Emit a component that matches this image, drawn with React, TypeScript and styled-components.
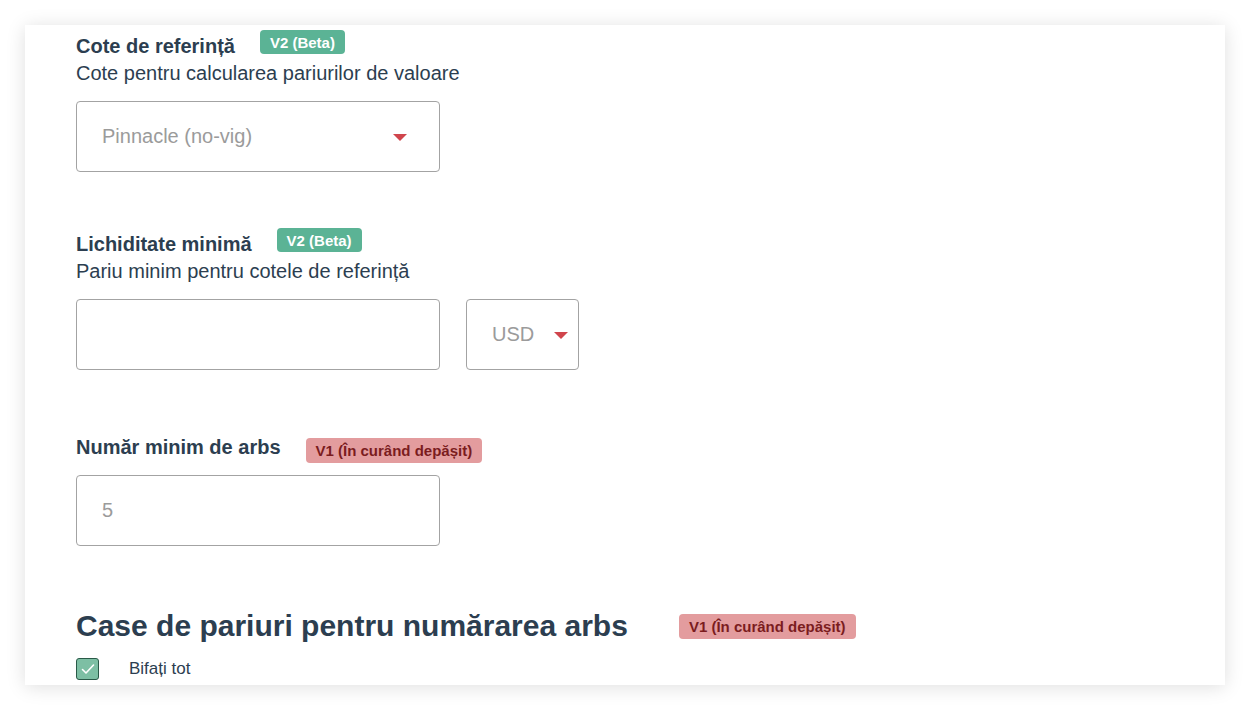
import React from "react";
import styled, { createGlobalStyle } from "styled-components";

const Global = createGlobalStyle`
  html, body { margin: 0; padding: 0; background: #ffffff; }
  body { font-family: "Liberation Sans", Arial, sans-serif; color: #2c3e50; }
  * { box-sizing: border-box; }
`;

const Page = styled.div`
  width: 1250px;
  height: 710px;
  padding: 25px;
  overflow: hidden;
`;

const Card = styled.div`
  width: 1200px;
  height: 660px;
  background: #fff;
  box-shadow: 0 2px 18px rgba(0, 0, 0, 0.13);
  padding: 5px 51px 0;
  overflow: hidden;
  display: flex;
  flex-direction: column;
`;

const Field = styled.section<{ $top: number }>`
  display: flex;
  flex-direction: column;
  margin-top: ${(p) => p.$top}px;
`;

const LabelRow = styled.div`
  display: flex;
  align-items: flex-start;
  gap: 25px;
`;

const Label = styled.div<{ $offset: number }>`
  font-size: 20px;
  font-weight: 700;
  line-height: 24px;
  margin-top: ${(p) => p.$offset}px;
  color: #2c3e50;
`;

const Badge = styled.span<{ $tone: "green" | "red"; $offset: number }>`
  display: inline-flex;
  align-items: center;
  height: ${(p) => (p.$tone === "green" ? 24 : 25)}px;
  padding: 0 10px;
  border-radius: 4px;
  font-size: 15px;
  font-weight: 700;
  margin-top: ${(p) => p.$offset}px;
  background: ${(p) => (p.$tone === "green" ? "#5bb395" : "#e39c9e")};
  color: ${(p) => (p.$tone === "green" ? "#ffffff" : "#7b1c1e")};
  white-space: nowrap;
`;

const Description = styled.div`
  font-size: 20px;
  line-height: 24px;
  color: #2c3e50;
  margin-top: 3px;
`;

const InputRow = styled.div<{ $top: number }>`
  display: flex;
  gap: 26px;
  margin-top: ${(p) => p.$top}px;
`;

const Box = styled.div<{ $width: number }>`
  position: relative;
  width: ${(p) => p.$width}px;
  height: 71px;
  border: 1px solid #a3a3a3;
  border-radius: 4px;
  display: flex;
  align-items: center;
  padding-left: 25px;
  font-size: 20px;
  color: #9b9b9b;
  background: #fff;
`;

const Caret = styled.span<{ $right: number }>`
  position: absolute;
  right: ${(p) => p.$right}px;
  top: 50%;
  margin-top: -3px;
  width: 0;
  height: 0;
  border-left: 7px solid transparent;
  border-right: 7px solid transparent;
  border-top: 7px solid #d0454c;
`;

const HeadingRow = styled.div`
  display: flex;
  align-items: center;
  gap: 51px;
  margin-top: 63px;
`;

const Heading = styled.h2`
  margin: 0;
  font-size: 30px;
  font-weight: 700;
  line-height: 34px;
  color: #2c3e50;
`;

const CheckRow = styled.label`
  display: flex;
  align-items: center;
  gap: 30px;
  margin-top: 15px;
  font-size: 17px;
  line-height: 20px;
  color: #2c3e50;
`;

const CheckBox = styled.span`
  width: 23px;
  height: 22px;
  border: 1.5px solid #2a5a48;
  border-radius: 3px;
  background: #7dbfa4;
  display: flex;
  align-items: center;
  justify-content: center;
`;

export default function App() {
  return (
    <>
      <Global />
      <Page>
        <Card>
          <Field $top={0}>
            <LabelRow>
              <Label $offset={4}>Cote de referință</Label>
              <Badge $tone="green" $offset={0}>V2 (Beta)</Badge>
            </LabelRow>
            <Description>Cote pentru calcularea pariurilor de valoare</Description>
            <InputRow $top={16}>
              <Box $width={364}>
                Pinnacle (no-vig)
                <Caret $right={32} />
              </Box>
            </InputRow>
          </Field>

          <Field $top={56}>
            <LabelRow>
              <Label $offset={4}>Lichiditate minimă</Label>
              <Badge $tone="green" $offset={0}>V2 (Beta)</Badge>
            </LabelRow>
            <Description>Pariu minim pentru cotele de referință</Description>
            <InputRow $top={16}>
              <Box $width={364} />
              <Box $width={113}>
                USD
                <Caret $right={10} />
              </Box>
            </InputRow>
          </Field>

          <Field $top={65}>
            <LabelRow>
              <Label $offset={0}>Număr minim de arbs</Label>
              <Badge $tone="red" $offset={3}>V1 (În curând depășit)</Badge>
            </LabelRow>
            <InputRow $top={12}>
              <Box $width={364}>5</Box>
            </InputRow>
          </Field>

          <HeadingRow>
            <Heading>Case de pariuri pentru numărarea arbs</Heading>
            <Badge $tone="red" $offset={0}>V1 (În curând depășit)</Badge>
          </HeadingRow>
          <CheckRow>
            <CheckBox>
              <svg width="14" height="12" viewBox="0 0 14 12" fill="none">
                <path d="M1.5 6.5 L5 10 L12.5 2" stroke="#fff" strokeWidth="1.6" strokeLinecap="round" strokeLinejoin="round" />
              </svg>
            </CheckBox>
            Bifați tot
          </CheckRow>
        </Card>
      </Page>
    </>
  );
}
